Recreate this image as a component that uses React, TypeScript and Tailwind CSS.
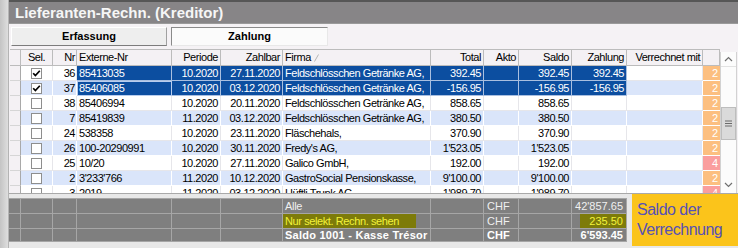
import React from "react";

const COLS =
  "grid grid-cols-[11px_32px_24px_95px_49px_62px_148px_53px_35px_53px_55px_76px_17px]";
const FCOLS =
  "grid grid-cols-[12px_32px_24px_95px_49px_62px_148px_53px_35px_53px_55px]";

type Row = {
  nr: string;
  ext: string;
  per: string;
  zahl: string;
  firma: string;
  total: string;
  saldo: string;
  zahlung: string;
  badge: string;
  pink?: boolean;
  checked?: boolean;
  selected?: boolean;
  focus?: boolean;
};

const rows: Row[] = [
  { nr: "36", ext: "85413035", per: "10.2020", zahl: "27.11.2020", firma: "Feldschlösschen Getränke AG,", total: "392.45", saldo: "392.45", zahlung: "392.45", badge: "2", checked: true, selected: true },
  { nr: "37", ext: "85406085", per: "10.2020", zahl: "03.12.2020", firma: "Feldschlösschen Getränke AG,", total: "-156.95", saldo: "-156.95", zahlung: "-156.95", badge: "2", checked: true, selected: true, focus: true },
  { nr: "38", ext: "85406994", per: "10.2020", zahl: "20.11.2020", firma: "Feldschlösschen Getränke AG,", total: "858.65", saldo: "858.65", zahlung: "", badge: "2" },
  { nr: "7", ext: "85419839", per: "11.2020", zahl: "03.12.2020", firma: "Feldschlösschen Getränke AG,", total: "380.50", saldo: "380.50", zahlung: "", badge: "2" },
  { nr: "24", ext: "538358", per: "10.2020", zahl: "23.11.2020", firma: "Fläschehals,", total: "370.90", saldo: "370.90", zahlung: "", badge: "2" },
  { nr: "26", ext: "100-20290991", per: "10.2020", zahl: "30.11.2020", firma: "Fredy's AG,", total: "1'523.05", saldo: "1'523.05", zahlung: "", badge: "2" },
  { nr: "25", ext: "10/20", per: "10.2020", zahl: "27.11.2020", firma: "Galico GmbH,", total: "192.00", saldo: "192.00", zahlung: "", badge: "4", pink: true },
  { nr: "2", ext: "3'233'766", per: "11.2020", zahl: "10.12.2020", firma: "GastroSocial Pensionskasse,", total: "9'100.00", saldo: "9'100.00", zahlung: "", badge: "2" },
  { nr: "3", ext: "2019", per: "11.2020", zahl: "03.12.2020", firma: "Hüftli Trunk AG,", total: "1'989.70", saldo: "1'989.70", zahlung: "", badge: "4", pink: true },
];

function Check({ checked }: { checked?: boolean }) {
  return (
    <span className="w-[11px] h-[11px] border border-[#8e8e8e] bg-white flex items-center justify-center">
      {checked && (
        <svg width="9" height="9" viewBox="0 0 9 9">
          <path d="M1.2 4.2 L3.4 6.6 L7.8 1.8" stroke="#000" strokeWidth="1.7" fill="none" />
        </svg>
      )}
    </span>
  );
}

function DataRow({ r, i }: { r: Row; i: number }) {
  const alt = i % 2 === 1;
  const base = alt ? "bg-[#dae5fa] border-white" : "bg-white border-[#e6e6ea]";
  const sel = "bg-[#0c4ea0] text-white border-[#a9bfe0]";
  const cell =
    "h-[15px] border-r border-b leading-[14px] overflow-hidden whitespace-nowrap tracking-[-0.45px]";
  const c = (idx: number) => (r.selected && idx >= 3 && idx <= 10 ? sel : base);
  return (
    <div className={COLS}>
      <div className="h-[15px] bg-[#f4f1f4] border-r border-b border-r-[#a9a9a9] border-b-[#d6d6d6]" />
      <div className={`${cell} ${c(1)} flex items-center justify-center`}>
        <Check checked={r.checked} />
      </div>
      <div className={`${cell} ${c(2)} text-right pr-[1px]`}>{r.nr}</div>
      <div
        className={`${cell} ${c(3)} pl-[2px] ${
          r.focus ? "outline outline-1 -outline-offset-1 outline-[#b8cdee]" : ""
        }`}
      >
        {r.ext}
      </div>
      <div className={`${cell} ${c(4)} text-right pr-[2px]`}>{r.per}</div>
      <div className={`${cell} ${c(5)} text-right pr-[2px]`}>{r.zahl}</div>
      <div className={`${cell} ${c(6)} pl-[2px]`}>{r.firma}</div>
      <div className={`${cell} ${c(7)} text-right pr-[2px]`}>{r.total}</div>
      <div className={`${cell} ${c(8)}`} />
      <div className={`${cell} ${c(9)} text-right pr-[2px]`}>{r.saldo}</div>
      <div className={`${cell} ${c(10)} text-right pr-[2px]`}>{r.zahlung}</div>
      <div className={`${cell} ${c(11)}`} />
      <div
        className={`h-[15px] border-b border-white leading-[14px] text-right pr-[2px] text-white ${
          r.pink ? "bg-[#fa9e9e]" : "bg-[#fcbf80]"
        }`}
      >
        {r.badge}
      </div>
    </div>
  );
}

function Header() {
  const h =
    "h-[17px] border-r border-t border-b border-[#bcbcbc] leading-[15px] whitespace-nowrap overflow-hidden tracking-[-0.45px]";
  return (
    <div className={`${COLS} bg-[#f4f1f4]`}>
      <div className={h} />
      <div className={`${h} text-center`}>Sel.</div>
      <div className={`${h} text-right pr-[1px]`}>Nr</div>
      <div className={`${h} pl-[2px]`}>Externe-Nr</div>
      <div className={`${h} text-right pr-[2px]`}>Periode</div>
      <div className={`${h} text-right pr-[2px]`}>Zahlbar</div>
      <div className={`${h} pl-[2px] flex items-center gap-[3px]`}>
        <span>Firma</span>
        <svg width="6" height="8" viewBox="0 0 6 8">
          <path d="M0.5 7.5 L4.5 0.5" stroke="#b4b4b4" strokeWidth="1" fill="none" />
        </svg>
      </div>
      <div className={`${h} text-right pr-[2px]`}>Total</div>
      <div className={`${h} text-right pr-[2px]`}>Akto</div>
      <div className={`${h} text-right pr-[2px]`}>Saldo</div>
      <div className={`${h} text-right pr-[2px]`}>Zahlung</div>
      <div className={`${h} text-right pr-[2px]`}>Verrechnet mit</div>
      <div className={h} />
    </div>
  );
}

function Scrollbar() {
  return (
    <div className="w-[17px] mt-[3px] h-[141px] bg-[#fcfcfc] border-l border-r border-[#d2d2d2] flex flex-col">
      <div className="h-[15px] flex items-center justify-center border-b border-[#e2e2e2]">
        <svg width="9" height="6" viewBox="0 0 9 6">
          <path d="M1 5 L4.5 1.5 L8 5" stroke="#707070" strokeWidth="1.2" fill="none" />
        </svg>
      </div>
      <div className="h-[40px]" />
      <div className="h-[33px] bg-[#dadada] border border-[#bdbdbd] flex items-center justify-center">
        <svg width="7" height="7" viewBox="0 0 7 7">
          <path d="M0 1 H7 M0 3.5 H7 M0 6 H7" stroke="#6a6a6a" strokeWidth="1" />
        </svg>
      </div>
      <div className="flex-1" />
      <div className="h-[13px] flex items-center justify-center">
        <svg width="9" height="6" viewBox="0 0 9 6">
          <path d="M1 1 L4.5 4.5 L8 1" stroke="#707070" strokeWidth="1.2" fill="none" />
        </svg>
      </div>
      <div className="h-[2px]" />
    </div>
  );
}

function FooterRow({ h, children }: { h: string; children: (React.ReactNode | null)[] }) {
  return (
    <div className={FCOLS}>
      {children.map((ch, i) => (
        <div
          key={i}
          className={`${h} border-r border-b border-[#a6a6a6] overflow-hidden whitespace-nowrap flex items-center`}
        >
          {ch}
        </div>
      ))}
    </div>
  );
}

export default function App() {
  const empty = (n: number) => Array.from({ length: n }, () => null);
  return (
    <div
      className="w-[738px] h-[248px] flex bg-[#e6e6e6] text-[11px] text-black overflow-hidden"
      style={{ fontFamily: "'Liberation Sans', Arial, sans-serif" }}
    >
      <div className="w-[9px] h-full bg-gradient-to-r from-[#c4c4c4] to-[#dedede] border-r border-[#b4b4b4]" />
      <div className="flex-1 flex flex-col">
        <div className="h-[24px] bg-[#878587] border-t-2 border-[#565656] border-b border-b-[#9a9a9a] pl-[6px] flex items-center">
          <span className="text-[15px] font-bold text-[#f6f6f6] leading-none">
            Lieferanten-Rechn. (Kreditor)
          </span>
        </div>
        <div className="h-[25px] bg-[#f5f2f5] flex items-start pt-[3px] pl-[2px] gap-[4px]">
          <div className="w-[156px] h-[19px] bg-[#eeeeee] border border-t-white border-l-white border-r-[#a0a0a0] border-b-[#7c7c7c] flex items-center justify-center font-bold text-[11px]">
            Erfassung
          </div>
          <div className="w-[157px] h-[19px] bg-[#fbfbfb] border border-t-[#8a8a8a] border-l-[#8a8a8a] border-r-[#e8e8e8] border-b-[#e8e8e8] flex items-center justify-center font-bold text-[11px]">
            Zahlung
          </div>
        </div>
        <div className="flex bg-[#f5f2f5] pl-[1px] items-start">
          <div className="w-[710px] flex flex-col">
            <Header />
            <div className="h-[127px] overflow-hidden flex flex-col">
              {rows.map((r, i) => (
                <DataRow key={i} r={r} i={i} />
              ))}
            </div>
          </div>
          <Scrollbar />
        </div>
        <div className="h-[1px] bg-[#a9a9a9]" />
        <div className="flex-1 flex items-start bg-[#e8e8e8]">
          <div className="w-[618px] mt-[4px] bg-[#7f7f7f] border-t border-[#a6a6a6] text-[#f0f0f0]">
            <FooterRow h="h-[15px]">
              {[
                ...empty(6),
                <span className="pl-[2px] tracking-[-0.3px]">Alle</span>,
                null,
                <span className="pl-[3px]">CHF</span>,
                null,
                <span className="w-full text-right pr-[3px]">42'857.65</span>,
              ]}
            </FooterRow>
            <FooterRow h="h-[15px]">
              {[
                ...empty(6),
                <span className="h-full w-[133px] bg-[#7d7b0a] text-[#f2f23a] pl-[2px] flex items-center tracking-[-0.4px]">
                  Nur selekt. Rechn. sehen
                </span>,
                null,
                <span className="pl-[3px]">CHF</span>,
                null,
                <span className="w-full h-full flex justify-end">
                  <span className="h-full bg-[#7d7b0a] text-[#f2f23a] pl-[9px] pr-[3px] flex items-center">
                    235.50
                  </span>
                </span>,
              ]}
            </FooterRow>
            <FooterRow h="h-[13px]">
              {[
                ...empty(6),
                <span className="pl-[2px] font-bold tracking-[0.25px] text-white">
                  Saldo 1001 - Kasse Trésor
                </span>,
                null,
                <span className="pl-[3px] font-bold text-white">CHF</span>,
                null,
                <span className="w-full text-right pr-[3px] font-bold text-white">6'593.45</span>,
              ]}
            </FooterRow>
          </div>
          <div className="w-[5px]" />
          <div className="w-[106px] h-[52px] bg-[#fbc41b] pl-[5px] flex flex-col justify-center text-[16px] leading-[20px] tracking-[-0.5px] text-[#5651b6]">
            <span>Saldo der</span>
            <span>Verrechnung</span>
          </div>
        </div>
      </div>
    </div>
  );
}
